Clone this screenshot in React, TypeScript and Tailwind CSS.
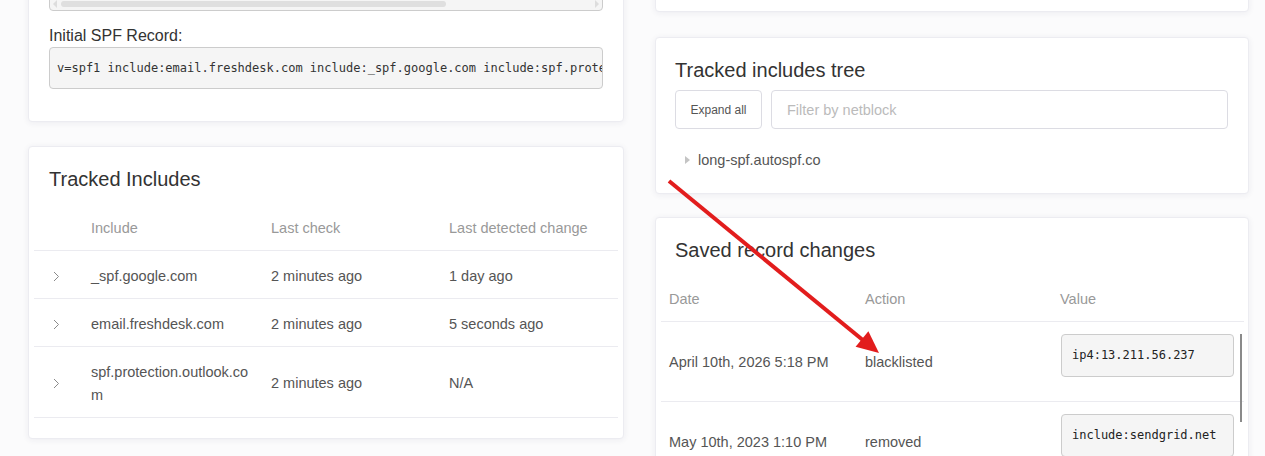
import React from 'react';

const includes = [
  { name: '_spf.google.com', check: '2 minutes ago', change: '1 day ago' },
  { name: 'email.freshdesk.com', check: '2 minutes ago', change: '5 seconds ago' },
  { name: 'spf.protection.outlook.com', check: '2 minutes ago', change: 'N/A' },
];

const changes = [
  { date: 'April 10th, 2026 5:18 PM', action: 'blacklisted', value: 'ip4:13.211.56.237' },
  { date: 'May 10th, 2023 1:10 PM', action: 'removed', value: 'include:sendgrid.net' },
];

const card = 'bg-white border border-[#ececf1] rounded-[4px] shadow-[0_1px_6px_rgba(40,40,80,0.07)]';
const mono = "font-['DejaVu_Sans_Mono','Liberation_Mono',monospace]";
const th = 'px-2 pb-[10px] align-bottom font-normal';

function Chevron() {
  return (
    <svg className="w-[8px] h-[11px]" viewBox="0 0 8 11" fill="none" stroke="#8a8a8a" strokeWidth={1}>
      <path d="M2 1l4.5 4.5L2 10" />
    </svg>
  );
}

export default function App() {
  return (
    <div className="relative h-[456px] overflow-hidden bg-[#fbfbfc] font-['Liberation_Sans',Arial,sans-serif] text-[14.5px] text-[#555]">
      <div className="flex gap-[31px] pl-[28px]">
        {/* left column */}
        <div className="w-[596px] flex flex-col gap-[24px] mt-[-50px]">
          <div className={`${card} px-5 pt-5 pb-[20px]`}>
            <div className="h-[40px] bg-[#f5f5f5] border border-[#ccc] rounded-[4px] flex items-end">
              <div className="flex items-center w-full h-[10px] mb-[1px] px-[3px]">
                <span className="w-0 h-0 border-y-[4px] border-y-transparent border-r-[4px] border-r-[#ddd]" />
                <div className="ml-[4px] w-[385px] h-[6px] rounded-full bg-[#dfdfdf]" />
                <div className="flex-1" />
                <span className="w-0 h-0 border-y-[4px] border-y-transparent border-l-[4px] border-l-[#ddd]" />
              </div>
            </div>
            <div className="mt-[14px] text-[16px] leading-[22px] text-[#333]">Initial SPF Record:</div>
            <div className={`${mono} mb-[12px] bg-[#f5f5f5] border border-[#ccc] rounded-[4px] px-[7px] py-[11px] text-[12px] leading-[18px] text-[#333] whitespace-nowrap overflow-hidden`}>
              v=spf1 include:email.freshdesk.com include:_spf.google.com include:spf.protection.outlook.com ~all
            </div>
          </div>

          <div className={`${card} pt-[18px] pb-[20px]`}>
            <h3 className="px-5 text-[20px] leading-[28px] text-[#333]">Tracked Includes</h3>
            <table className="mx-[5px] mt-[10px] w-[584px] table-fixed border-collapse">
              <colgroup>
                <col className="w-[49px]" />
                <col className="w-[180px]" />
                <col className="w-[178px]" />
                <col />
              </colgroup>
              <thead>
                <tr className="border-b border-[#ebebf0] h-[47px] text-left text-[#999]">
                  <th className={th} />
                  <th className={th}>Include</th>
                  <th className={th}>Last check</th>
                  <th className={th}>Last detected change</th>
                </tr>
              </thead>
              <tbody>
                {includes.map((row) => (
                  <tr key={row.name} className="border-b border-[#ebebf0]">
                    <td className="pl-[18px] pt-[14px] pb-[10px] align-middle">
                      <Chevron />
                    </td>
                    <td className="px-2 pt-[14px] pb-[10px] leading-[23px] break-all">{row.name}</td>
                    <td className="px-2 pt-[14px] pb-[10px] leading-[23px]">{row.check}</td>
                    <td className="px-2 pt-[14px] pb-[10px] leading-[23px]">{row.change}</td>
                  </tr>
                ))}
              </tbody>
            </table>
          </div>
        </div>

        {/* right column */}
        <div className="w-[594px] flex flex-col mt-[-40px]">
          <div className={`${card} h-[52px]`} />

          <div className={`${card} mt-[25px] px-[19px] pt-[18px] pb-[22px]`}>
            <h3 className="text-[20px] leading-[28px] text-[#333]">Tracked includes tree</h3>
            <div className="mt-[6px] flex gap-[9px] pr-[1px]">
              <button className="w-[87px] h-[39px] border border-[#dcdce3] rounded-[4px] bg-white text-[12px] text-[#555]">
                Expand all
              </button>
              <input
                className="flex-1 h-[39px] border border-[#dcdce3] rounded-[4px] px-[15px] text-[14.5px] outline-none placeholder:text-[#bbb]"
                placeholder="Filter by netblock"
              />
            </div>
            <div className="mt-[20px] flex items-center gap-[8px] pl-[10px] leading-[22px]">
              <span className="w-0 h-0 border-y-[4px] border-y-transparent border-l-[5px] border-l-[#c4c4c4]" />
              <span>long-spf.autospf.co</span>
            </div>
          </div>

          <div className={`${card} relative mt-[23px] pt-[18px] pb-[20px]`}>
            <h3 className="px-[19px] text-[20px] leading-[28px] text-[#333]">Saved record changes</h3>
            <table className="mx-[5px] mt-[10px] w-[583px] table-fixed border-collapse">
              <colgroup>
                <col className="w-[196px]" />
                <col className="w-[195px]" />
                <col />
              </colgroup>
              <thead>
                <tr className="border-b border-[#ebebf0] h-[47px] text-left text-[#999]">
                  <th className={th}>Date</th>
                  <th className={th}>Action</th>
                  <th className={th}>Value</th>
                </tr>
              </thead>
              <tbody>
                {changes.map((row) => (
                  <tr key={row.date} className="border-b border-[#ebebf0] h-[80px]">
                    <td className="px-2 pt-[4px]">{row.date}</td>
                    <td className="px-2 pt-[4px]">{row.action}</td>
                    <td className="pl-[9px] pr-[10px] pt-[12px] align-top">
                      <div className={`${mono} bg-[#f5f5f5] border border-[#ccc] rounded-[4px] px-[10px] py-[12px] text-[12px] leading-[17px] text-[#222]`}>
                        {row.value}
                      </div>
                    </td>
                  </tr>
                ))}
              </tbody>
            </table>
            <div className="absolute left-[584px] top-[116px] w-[2px] h-[88px] bg-[#8a8a8a]" />
          </div>
        </div>
      </div>

      {/* annotation arrow */}
      <svg className="absolute inset-0 pointer-events-none" width="1265" height="456">
        <line x1="669" y1="181" x2="864" y2="341" stroke="#e21d1d" strokeWidth="4" />
        <polygon points="879,353 855.6,346.8 868.4,331.2" fill="#e21d1d" />
      </svg>
    </div>
  );
}
